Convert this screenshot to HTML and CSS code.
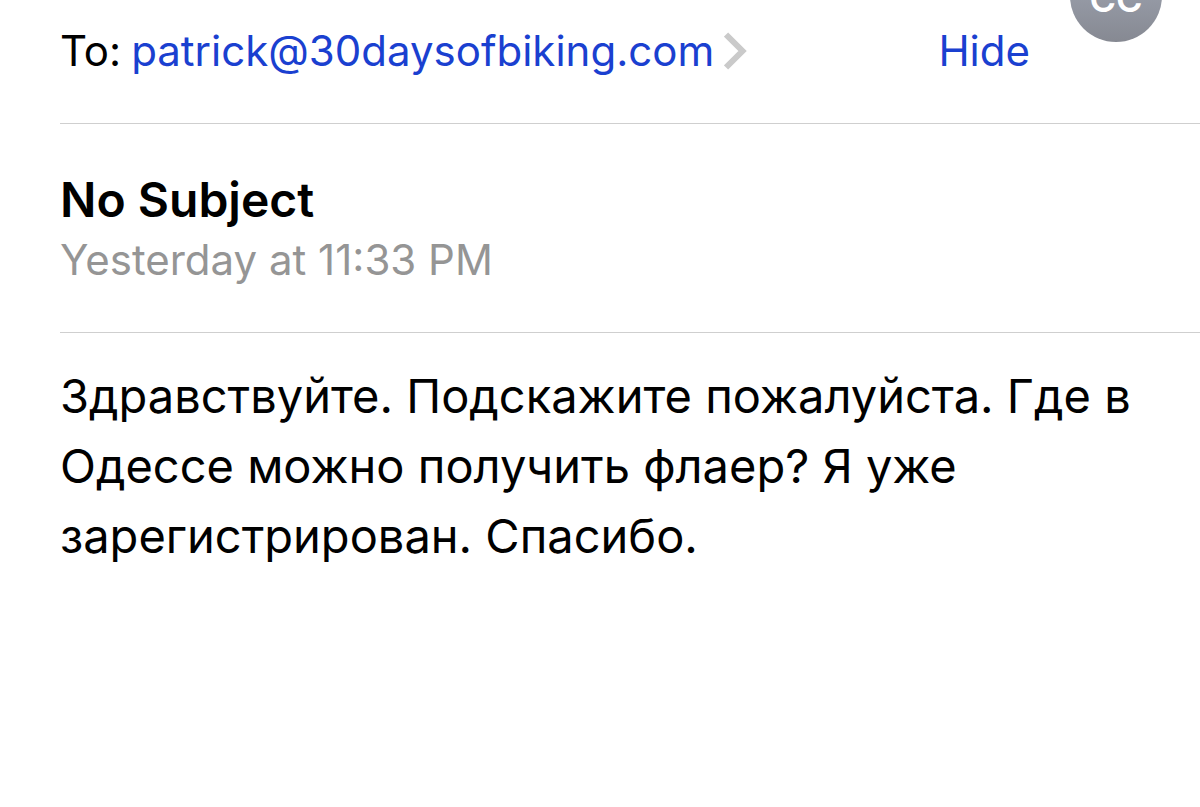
FILE: index.html
```html
<!DOCTYPE html>
<html lang="en">
<head>
  <meta charset="UTF-8" />
  <title>No Subject</title>
  <meta name="viewport" content="width=device-width, initial-scale=1.0" />
  <link rel="stylesheet" href="styles.css">
</head>
<body>

  <main class="mail">
    <header class="mail-header">
      <div class="mail-to">
        <span>To:</span>
        <a class="mail-address" href="mailto:patrick@30daysofbiking.com">patrick@30daysofbiking.com</a>
        <svg class="mail-chevron" viewBox="0 0 24 38" aria-hidden="true">
          <path d="M2 2.5 L18.5 19 L2 35.5" />
        </svg>
      </div>
      <button class="mail-hide" type="button">Hide</button>
      <div class="mail-avatar">CC</div>
    </header>

    <section class="mail-subject">
      <h1 class="mail-title">No Subject</h1>
      <p class="mail-date">Yesterday at 11:33 PM</p>
    </section>

    <p class="mail-body" lang="ru">Здравствуйте. Подскажите пожалуйста. Где в Одессе можно получить флаер? Я уже зарегистрирован. Спасибо.</p>
  </main>

</body>
</html>
```
FILE: styles.css
```css
* {
  box-sizing: border-box;
}

body {
  margin: 0;
  background: #fff;
  color: #000;
  font-family: Inter, sans-serif;
}

.mail {
  padding-left: 60px;
  overflow: hidden;
}

.mail-header {
  position: relative;
  display: flex;
  align-items: center;
  justify-content: space-between;
  height: 124px;
  padding: 0 170px 22px 0;
  border-bottom: 1px solid #cfcfcf;
  font-size: 42px;
}

.mail-to {
  display: flex;
  align-items: center;
  gap: 10px;
}

.mail-address {
  color: #1a40d0;
  text-decoration: none;
}

.mail-chevron {
  width: 24px;
  height: 38px;
  fill: none;
  stroke: #cacaca;
  stroke-width: 6;
}

.mail-hide {
  padding: 0;
  border: none;
  background: none;
  color: #1a40d0;
  font: inherit;
  cursor: pointer;
}

/* Sender badge, scrolled partly off the top */
.mail-avatar {
  position: absolute;
  top: -50px;
  right: 38px;
  display: flex;
  align-items: center;
  justify-content: center;
  width: 92px;
  height: 92px;
  padding-top: 6px;
  border-radius: 50%;
  background: linear-gradient(#a5abb9, #868992);
  color: #fff;
  font-size: 36px;
  font-weight: 600;
}

.mail-subject {
  padding: 46px 0 42px;
  border-bottom: 1px solid #cfcfcf;
}

.mail-title {
  margin: 0;
  font-size: 48px;
  font-weight: 600;
  line-height: 60px;
}

.mail-date {
  margin: 0;
  color: #959595;
  font-size: 42px;
  line-height: 60px;
}

.mail-body {
  margin: 0;
  padding: 28px 60px 28px 0;
  font-size: 47px;
  line-height: 70px;
}
```
